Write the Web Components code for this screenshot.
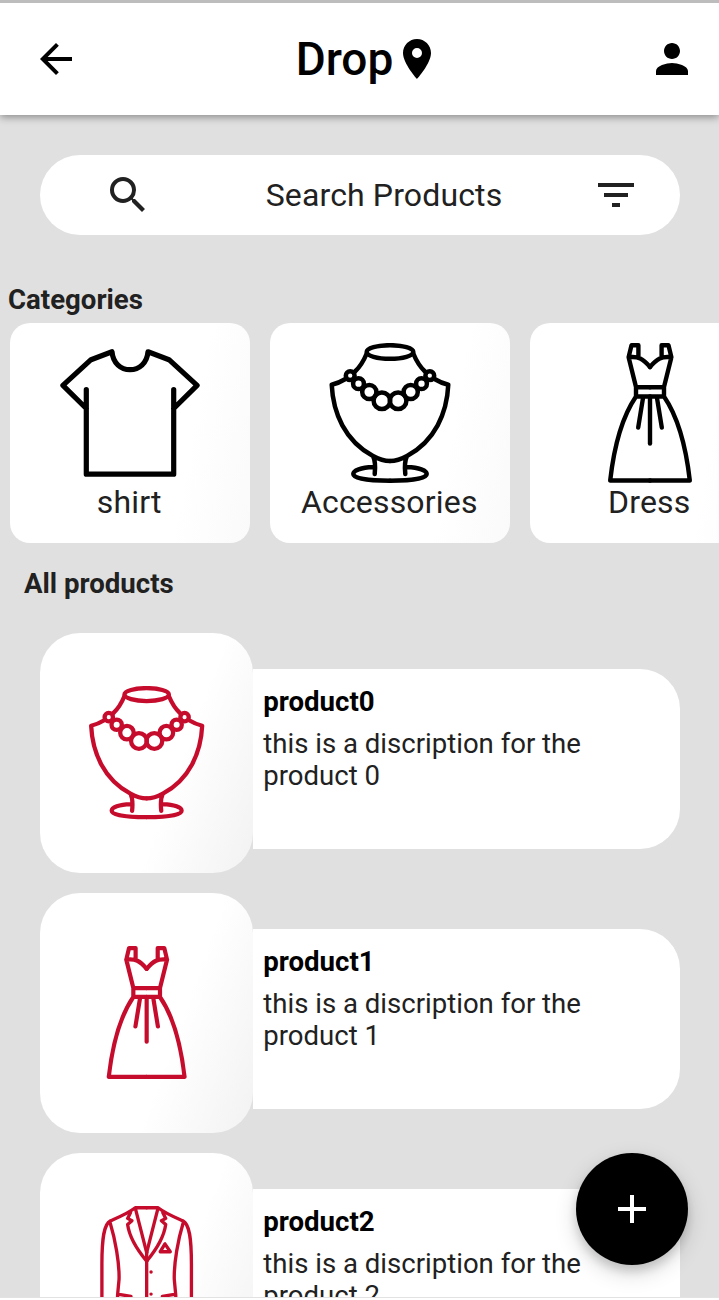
<!DOCTYPE html>
<html lang="en">
<head>
<meta charset="utf-8">
<title>Drop</title>
<style>
html,body{margin:0;height:1300px;overflow:hidden;background:#e0e0e0}
body{font-family:Roboto,sans-serif;color:#212121}
</style>
</head>
<body>
<drop-app></drop-app>
<script>
const mirror = d => `${d}<g transform="matrix(-1 0 0 1 140 0)">${d}</g>`;
const GLYPHS = {
  back: '<path d="M20 11H7.83l5.59-5.59L12 4l-8 8 8 8 1.41-1.41L7.83 13H20z"/>',
  place: '<path d="M12 2C8.13 2 5 5.13 5 9c0 5.25 7 13 7 13s7-7.75 7-13c0-3.87-3.13-7-7-7zm0 9.5a2.5 2.5 0 1 1 0-5 2.5 2.5 0 0 1 0 5z"/>',
  person: '<path d="M12 12c2.21 0 4-1.79 4-4s-1.79-4-4-4-4 1.790-4 4 1.790 4 4 4zm0 2c-2.670 0-8 1.340-8 4v2h16v-2c0-2.660-5.330-4-8-4z"/>',
  search: '<path d="M15.5 14h-.79l-.28-.27A6.47 6.47 0 0 0 16 9.5 6.5 6.5 0 1 0 9.5 16c1.610 0 3.090-.59 4.230-1.570l.27.28v.79l5 4.990L20.490 19zm-6 0C7.010 14 5 11.990 5 9.500S7.010 5 9.500 5 14 7.010 14 9.500 11.990 14 9.500 14z"/>',
  filter: '<path d="M10 18h4v-2h-4zM3 6v2h18V6zm3 7h12v-2H6z"/>',
  add: '<path d="M19 13h-6v6h-2v-6H5v-2h6V5h2v6h6z"/>'
};
const ART = {
  shirt: [5.2, '<path d="M26.300 65.500L2.900 42.300 31 16.700 52 8.800C53 20.500 61 26.700 70 26.700S87 20.500 88 8.800L109 16.700 137.100 42.300 113.700 65.500M26.300 46.500V131.200H113.700V46.500"/>'],
  necklace: [4.500, '<ellipse cx="70" cy="9" rx="23.300" ry="6.800"/>' + mirror('<path d="M46.700 10.500Q42 22 35 28.500M25.500 36Q19 40 11.700 41.700C13 70 25 98 53 113Q62 118 70 118M53 113Q56 119 54.700 131M53 124C41 124.500 33.300 127.500 33.300 131C33.300 135.500 48 137.700 70 137.700"/><circle cx="30.200" cy="32.700" r="4.400"/><circle cx="38.500" cy="40.700" r="5.400"/><circle cx="49.300" cy="49" r="7.100"/><circle cx="61.900" cy="57.700" r="8.300"/>')],
  dress: [4.400, mirror('<path d="M58.400 13V2.200H51.500L48.600 14.300C58 13 63 15.500 70 24M48.600 14.300L56 44V53.500C42 74 34 104 30.200 137.500H70M56 44.300H70M56 53.500H70M63 55L58.200 84.500"/>') + '<path d="M70 54V100.500"/>'],
  blazer: [3.500, mirror('<path d="M70 1.800H58C50 8 40 12 32 15.500C25 19 23 34 23 61V130M31.500 17C37 35 41.500 60 41 77L39.500 93L38 136M58 2L70 49M53 7L50 13 54.500 15.500 50 19.500C52 34 60 46 70 58M39.500 92.500L53.500 95"/>') + '<path d="M70 48V136M89.200 39.700L84.300 48H94.800Z"/><g fill="currentColor" stroke="none"><circle cx="74.600" cy="69.300" r="1.800"/><circle cx="74.600" cy="92.500" r="1.800"/></g>']
};

function define(name, render) {
  customElements.define(name, class extends HTMLElement {
    connectedCallback() {
      if (this.shadowRoot) return;
      const t = document.createElement('template');
      t.innerHTML = render(this);
      this.attachShadow({ mode: 'open' }).append(t.content.cloneNode(true));
    }
  });
}

define('ui-icon', e => `<style>:host{display:block;flex:none;width:48px;height:48px}svg{display:block;fill:currentColor}</style>
  <svg width="48" height="48" viewBox="0 0 24 24">${GLYPHS[e.getAttribute('name')]}</svg>`);

define('line-art', e => {
  const [w, d] = ART[e.getAttribute('name')];
  return `<style>:host{display:block;flex:none;width:var(--art,140px);height:var(--art,140px)}
    svg{display:block;width:100%;height:100%;fill:none;stroke:currentColor;stroke-linecap:round;stroke-linejoin:round}</style>
    <svg viewBox="0 0 140 140" stroke-width="${w}">${d}</svg>`;
});

define('app-header', () => `<style>
  :host{display:flex;flex:none;box-sizing:border-box;height:115px;border-top:3px solid #bdbdbd;padding:0 23px 0 32px;align-items:center;justify-content:space-between;background:#fff;color:#000;box-shadow:0 2px 8px rgba(0,0,0,.4);position:relative;z-index:1}
  .t{display:flex;align-items:center;font-size:46px;font-weight:500;line-height:54px;margin-left:9px}
  </style><ui-icon name="back"></ui-icon><div class="t"><slot></slot><ui-icon name="place"></ui-icon></div><ui-icon name="person"></ui-icon>`);

define('search-bar', () => `<style>
  :host{display:flex;flex:none;box-sizing:border-box;height:80px;margin:40px 39px 0 40px;padding:0 40px 0 64px;border-radius:40px;background:#fff;align-items:center;justify-content:space-between}
  span{font-size:32px;letter-spacing:.13px;margin-left:24px}
  </style><ui-icon name="search"></ui-icon><span><slot></slot></span><ui-icon name="filter"></ui-icon>`);

define('section-title', () => `<style>:host{display:block;flex:none;font-size:27.600px;font-weight:700;line-height:32px}</style><slot></slot>`);

define('category-card', e => `<style>
  :host{display:flex;flex:none;flex-direction:column;align-items:center;box-sizing:border-box;width:240px;height:220px;padding-top:20px;border-radius:20px;background:linear-gradient(100deg,#fff 72%,#fafafa)}
  line-art{color:#000}
  span{font-size:32px;line-height:38px;letter-spacing:.18px;margin-right:1.500px}
  </style><line-art name="${e.getAttribute('art')}"></line-art><span><slot></slot></span>`);

define('product-card', e => `<style>
  :host{display:flex;flex:none;height:240px;align-items:flex-start;--art:133.330px}
  .pic{display:flex;flex:none;align-items:center;justify-content:center;width:213.300px;height:240px;border-radius:40px;color:#c60c2c;background:linear-gradient(110deg,#fff 62%,#f2f2f2)}
  .info{flex:1;box-sizing:border-box;height:180px;margin-top:36px;padding:17px 60px 0 10px;border-radius:0 40px 40px 0;background:#fff}
  .name{font-size:27.600px;line-height:32px;font-weight:700;color:#000}
  .text{font-size:27.560px;line-height:32px;margin-top:10px}
  </style><div class="pic"><line-art name="${e.getAttribute('art')}"></line-art></div>
  <div class="info"><div class="name"><slot name="name"></slot></div><div class="text"><slot></slot></div></div>`);

define('add-button', () => `<style>
  :host{display:flex;align-items:center;justify-content:center;width:112px;height:112px;border-radius:50%;background:#000;color:#fff;box-shadow:0 6px 10px rgba(0,0,0,.14),0 8px 22px rgba(0,0,0,.16)}
  </style><ui-icon name="add"></ui-icon>`);

define('drop-app', () => `<style>
  :host{display:flex;flex-direction:column;box-sizing:border-box;position:relative;width:719px;height:1300px;overflow:hidden;background:#e0e0e0;border-bottom:2px solid #fff}
  .cats{display:flex;flex:none;gap:20px;margin:7px 0 0 10px;overflow:hidden}
  .list{display:flex;flex:1;min-height:0;flex-direction:column;gap:20px;margin:33px 39px 0 40px;overflow:hidden}
  .edge{flex:none;height:1px;background:#e2e2e2}
  add-button{position:absolute;right:31px;bottom:33px}
  </style>
  <app-header>Drop</app-header>
  <search-bar>Search Products</search-bar>
  <section-title style="margin:49px 0 0 8px">Categories</section-title>
  <div class="cats">
    <category-card art="shirt">shirt</category-card>
    <category-card art="necklace">Accessories</category-card>
    <category-card art="dress">Dress</category-card>
  </div>
  <section-title style="margin:25px 0 0 24px">All products</section-title>
  <div class="list">
    <product-card art="necklace"><span slot="name">product0</span>this is a discription for the product 0</product-card>
    <product-card art="dress"><span slot="name">product1</span>this is a discription for the product 1</product-card>
    <product-card art="blazer"><span slot="name">product2</span>this is a discription for the product 2</product-card>
  </div>
  <div class="edge"></div>
  <add-button></add-button>`);
</script>
</body>
</html>
